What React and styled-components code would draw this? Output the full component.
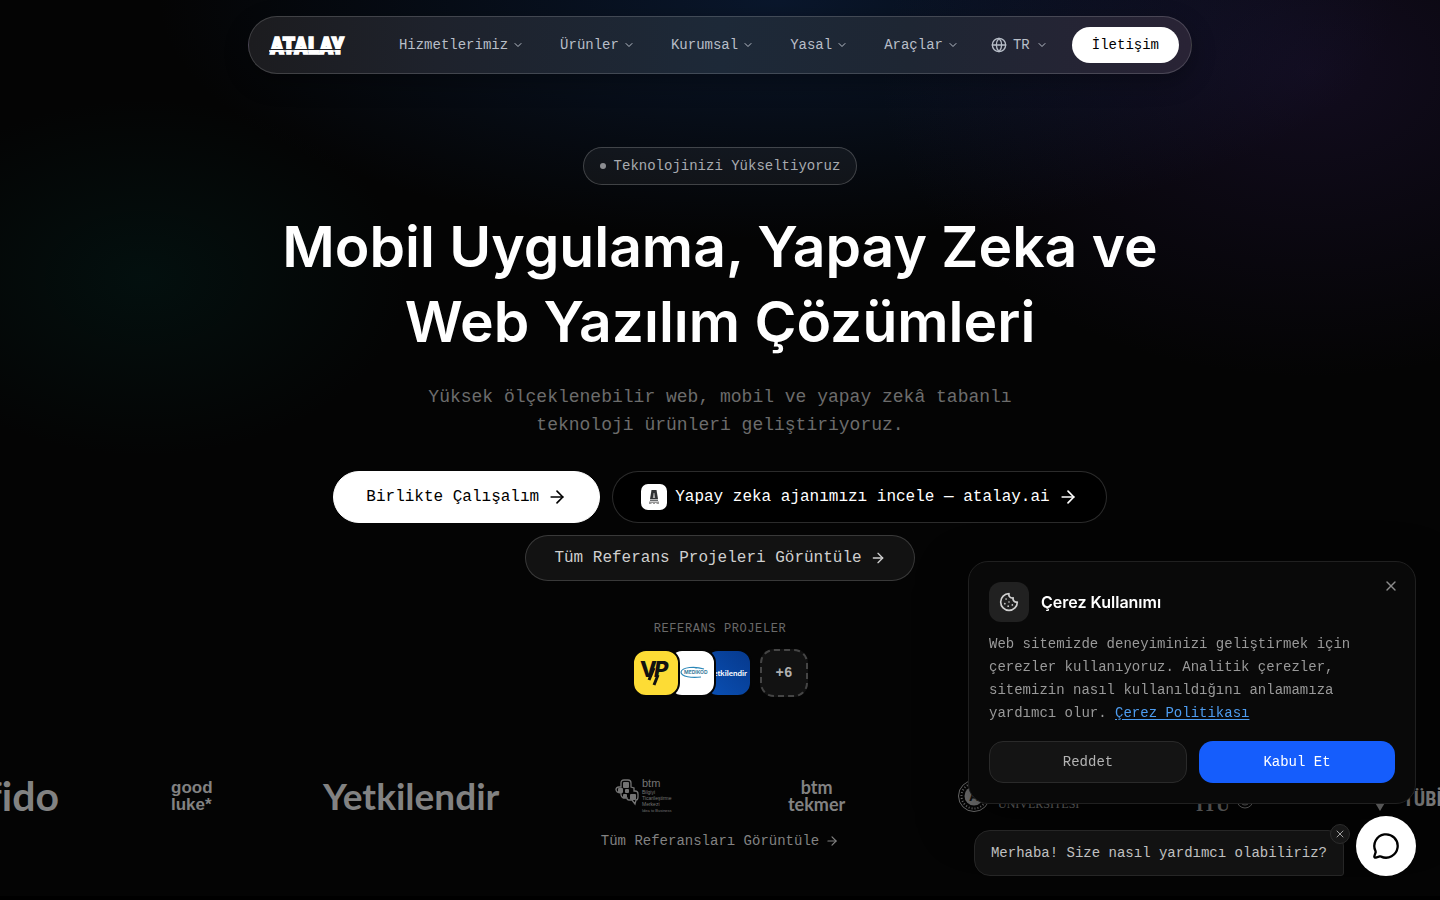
import styled, { createGlobalStyle } from 'styled-components';
import { ArrowRight, ChevronDown, Cookie, Globe, MessageCircle, X } from 'lucide-react';

const GlobalStyle = createGlobalStyle`
  * {
    box-sizing: border-box;
  }
  body {
    margin: 0;
    background: #000;
    color: #fff;
    font-family: "Liberation Mono", monospace;
    font-size: 14px;
    line-height: 20px;
  }
  h1, h2, p {
    margin: 0;
  }
  a {
    color: inherit;
    text-decoration: none;
  }
  button {
    font: inherit;
    color: inherit;
    cursor: pointer;
  }
`;

const Page = styled.div`
  overflow: hidden;
  padding-bottom: 45px;
  background:
    radial-gradient(480px 340px at 91% 8%, rgba(62, 38, 115, 0.24), transparent 90%),
    radial-gradient(310px 210px at 10% 31%, rgba(0, 62, 56, 0.2), transparent 85%),
    radial-gradient(620px 240px at 54% 0%, rgba(20, 54, 110, 0.38), transparent),
    #040404;
`;

const Header = styled.header`
  display: flex;
  justify-content: center;
  padding: 16px 24px 0;
`;

const NavBar = styled.nav`
  display: flex;
  align-items: center;
  justify-content: space-between;
  width: 100%;
  max-width: 944px;
  height: 58px;
  padding: 0 12px 0 20px;
  border: 1px solid rgba(255, 255, 255, 0.16);
  border-radius: 29px;
  background: linear-gradient(90deg, #1c1c1f 0%, #1e222c 20%, #1d2938 50%, #1e2633 70%, #292335 100%);
  box-shadow: 0 8px 24px rgba(0, 0, 0, 0.3);
`;

const Logo = styled.a`
  display: flex;
  svg {
    display: block;
    overflow: visible;
  }
`;

const Menu = styled.div`
  display: flex;
  align-items: center;
  gap: 4px;
`;

const MenuButton = styled.button`
  display: flex;
  align-items: center;
  gap: ${props => (props.$compact ? 6 : 4)}px;
  padding: 8px ${props => (props.$compact ? 12 : 16)}px;
  border: 0;
  background: none;
  color: #b8bec8;
`;

const ContactLink = styled.a`
  margin-left: 8px;
  padding: 8px 20px;
  border-radius: 18px;
  background: #fff;
  color: #000;
`;

const Hero = styled.main`
  display: flex;
  flex-direction: column;
  align-items: center;
  padding: 73px 24px 0;
  text-align: center;
`;

const Badge = styled.div`
  display: flex;
  align-items: center;
  gap: 8px;
  padding: 8px 16px;
  border: 1px solid rgba(255, 255, 255, 0.2);
  border-radius: 19px;
  background: rgba(255, 255, 255, 0.05);
  color: #a8abb0;
`;

const Dot = styled.span`
  width: 6px;
  height: 6px;
  border-radius: 50%;
  background: #8b8d91;
`;

const Title = styled.h1`
  max-width: 896px;
  margin-top: 24px;
  font-family: Inter, "Liberation Sans", sans-serif;
  font-size: 57px;
  font-weight: 600;
  line-height: 75px;
`;

const Subtitle = styled.p`
  max-width: 672px;
  margin-top: 24px;
  color: #6c6c6c;
  font-size: 18px;
  line-height: 28px;
`;

const Actions = styled.div`
  display: flex;
  flex-wrap: wrap;
  justify-content: center;
  gap: 12px;
  max-width: 896px;
  margin-top: 32px;
  font-size: 16px;
`;

const Action = styled.a`
  display: flex;
  align-items: center;
  gap: 8px;
  height: ${props => (props.$small ? 46 : 52)}px;
  padding: 0 28px;
  border: 1px solid rgba(255, 255, 255, 0.17);
  border-radius: 26px;
  background: ${props => (props.$small ? '#121212' : '#000')};
  color: ${props => (props.$small ? '#cfcfcf' : '#fff')};
`;

const PrimaryAction = styled(Action)`
  padding: 0 32px;
  border-color: #fff;
  background: #fff;
  color: #000;
`;

const AgentIcon = styled.span`
  display: flex;
  width: 26px;
  height: 26px;
  border-radius: 7px;
  background: #fff;
`;

const Label = styled.h2`
  margin-top: 40px;
  color: #6a6a6a;
  font-size: 12px;
  font-weight: 400;
  line-height: 16px;
  letter-spacing: 0.05em;
`;

const Projects = styled.div`
  display: flex;
  margin-top: 12px;
  isolation: isolate;
`;

const Project = styled.a`
  display: flex;
  align-items: center;
  justify-content: flex-end;
  z-index: ${props => props.$level};
  width: 48px;
  height: 48px;
  margin-right: -12px;
  overflow: hidden;
  border: 2px solid #040404;
  border-radius: 14px;
  background: ${props => props.$color};
`;

const ProjectName = styled.span`
  padding-right: 3px;
  font: 700 8px Lato, sans-serif;
`;

const MoreProjects = styled.a`
  display: flex;
  align-items: center;
  justify-content: center;
  width: 48px;
  height: 48px;
  margin-left: 20px;
  border: 2px dashed #454545;
  border-radius: 14px;
  background: #121212;
  color: #b0b0b0;
  font-weight: 700;
`;

const Brands = styled.div`
  display: flex;
  align-items: center;
  gap: 112px;
  height: 52px;
  margin-top: 73px;
  overflow: hidden;
  color: #828282;
  white-space: nowrap;
`;

const Brand = styled.div`
  display: flex;
  flex: none;
  align-items: center;
  justify-content: ${props => (props.$end ? 'flex-end' : 'flex-start')};
  width: ${props => props.$width}px;
  font-family: ${props => props.$font || 'Lato'}, sans-serif;
  font-size: ${props => props.$size || 16}px;
  font-variant-ligatures: none;
  font-weight: 700;
  line-height: ${props => props.$line || 48}px;
  text-align: ${props => props.$align || 'center'};
  svg {
    flex: none;
  }
`;

const AllReferences = styled.a`
  display: flex;
  align-items: center;
  justify-content: center;
  gap: 6px;
  width: fit-content;
  margin: 9px auto 0;
  color: #828282;
`;

const CookieCard = styled.section`
  position: fixed;
  right: 24px;
  bottom: 96px;
  width: 448px;
  padding: 20px;
  border: 1px solid #202020;
  border-radius: 20px;
  background: #090909;
  box-shadow: 0 16px 48px rgba(0, 0, 0, 0.5);
`;

const CookieHead = styled.div`
  display: flex;
  align-items: center;
  gap: 12px;
`;

const CookieIcon = styled.span`
  display: flex;
  align-items: center;
  justify-content: center;
  width: 40px;
  height: 40px;
  border-radius: 12px;
  background: #212121;
  color: #d0d0d0;
`;

const CookieTitle = styled.h2`
  font-family: Inter, "Liberation Sans", sans-serif;
  font-size: 16px;
  font-weight: 600;
  line-height: 24px;
`;

const CookieText = styled.p`
  margin: 11px 0 16px;
  color: #999;
  line-height: 23px;
  a {
    color: #4d9cf0;
    text-decoration: underline;
    text-underline-offset: 2px;
  }
`;

const CookieClose = styled.button`
  position: absolute;
  top: 12px;
  right: 12px;
  display: flex;
  padding: 4px;
  border: 0;
  background: none;
  color: #8c8c8c;
`;

const CookieActions = styled.div`
  display: flex;
  gap: 12px;
`;

const CookieButton = styled.button`
  flex: 1;
  height: 42px;
  padding: 0 16px;
  border: ${props => (props.$primary ? '0' : '1px solid #2a2a2a')};
  border-radius: 14px;
  background: ${props => (props.$primary ? '#155dfc' : '#141414')};
  color: ${props => (props.$primary ? '#fff' : '#b3b3b3')};
`;

const Chat = styled.aside`
  position: fixed;
  right: 24px;
  bottom: 24px;
  display: flex;
  align-items: flex-end;
  gap: 12px;
`;

const Bubble = styled.div`
  position: relative;
  padding: 12px 16px;
  border: 1px solid #262626;
  border-radius: 16px 16px 3px 16px;
  background: #121212;
  color: #c0c0c0;
`;

const BubbleClose = styled.button`
  position: absolute;
  top: -7px;
  right: -7px;
  display: flex;
  align-items: center;
  justify-content: center;
  width: 20px;
  height: 20px;
  padding: 0;
  border: 1px solid #2c2c2c;
  border-radius: 50%;
  background: #171717;
  color: #a0a0a0;
`;

const ChatButton = styled.button`
  display: flex;
  align-items: center;
  justify-content: center;
  width: 60px;
  height: 60px;
  padding: 0;
  border: 0;
  border-radius: 50%;
  background: #fff;
  color: #000;
`;

const menuItems = ['Hizmetlerimiz', 'Ürünler', 'Kurumsal', 'Yasal', 'Araçlar'];

const AtalayLogo = () => (
  <svg width="72" height="24" viewBox="0 0 72 24" role="img" aria-label="Atalay">
    <text
      x="1"
      y="21"
      fill="#fff"
      stroke="#fff"
      strokeWidth="1.400"
      fontFamily="'Roboto Condensed', 'Open Sans Condensed', 'Liberation Sans Narrow', 'Liberation Sans', sans-serif"
      fontSize="23"
      fontWeight="900"
    >
      ATALAY
    </text>
    <path d="M0 16.500H72" stroke="#1d1e24" strokeWidth="1" />
    <path d="M0 18H69" stroke="#fff" strokeWidth="1.500" />
  </svg>
);

const AgentLogo = () => (
  <svg width="26" height="26" viewBox="0 0 26 26">
    <path d="M10.500 6h5l1.500 9h-8z" fill="#2f3133" />
    <path d="M12.500 9h1l.7 5h-2.400z" fill="#aaa" />
    <path d="M9 15.500h8v1.500H9z" fill="#6a6c6e" />
    <path d="M8 17.500h10V20h-2.500v-1h-1.500v1h-2v-1h-1.500v1H8z" fill="#999" />
  </svg>
);

const VipLogo = () => (
  <svg width="44" height="44" viewBox="0 0 44 44" fill="#111">
    <g fontFamily="Inter, sans-serif" fontWeight="800">
      <text x="6" y="26" fontSize="22">V</text>
      <text x="20" y="26" fontSize="22" fontStyle="italic">P</text>
    </g>
    <path d="M15 29l5-12M24 24l-4 10" stroke="#111" strokeWidth="3" />
  </svg>
);

const MedikodLogo = () => (
  <svg width="44" height="44" viewBox="0 0 44 44">
    <path d="M34 18C25 15 12 16 11 21c0 5 11 6 20 5" fill="none" stroke="#2b87b8" strokeWidth="1.200" />
    <text x="14" y="23" fill="#397b9b" fontFamily="Inter, sans-serif" fontSize="5" fontWeight="700">MEDİKOD</text>
  </svg>
);

const BtmLogo = () => (
  <svg width="61" height="34" viewBox="0 0 61 34" fill="#747474" fontWeight="400">
    <path
      d="M6 8V4q0-3 3-3h4q3 0 3 3v4l3 1v3h1q3 0 3 3v3q0 3-2 3l-1 4-3-4h-3q-2 0-2-2-5 1-6-3v-2q-5 0-5-4V11q0-3 3-3z"
      fill="none"
      stroke="#747474"
      strokeWidth="1.300"
    />
    <rect x="8" y="3" width="6" height="6" rx="1" />
    <rect x="3" y="9" width="5" height="5" rx="1" />
    <rect x="10" y="10" width="4" height="4" rx="1" />
    <rect x="8" y="15" width="4" height="4" rx="1" />
    <rect x="15" y="15" width="6" height="6" rx="1" />
    <g fontFamily="Liberation Sans, sans-serif">
      <text x="27" y="8" fontSize="11">btm</text>
      <text x="27" y="15" fontSize="5">Bilgiyi</text>
      <text x="27" y="21" fontSize="5">Ticarileştirme</text>
      <text x="27" y="27" fontSize="5">Merkezi</text>
      <text x="27" y="33" fontSize="4">Idea to Business</text>
    </g>
  </svg>
);

const AnkaraLogo = () => (
  <svg width="126" height="34" viewBox="0 0 126 34" fill="#777" fontWeight="400">
    <circle cx="16" cy="17" r="15.500" fill="none" stroke="#777" />
    <circle cx="16" cy="17" r="12.500" fill="none" stroke="#777" strokeWidth="2" strokeDasharray="1 2" />
    <circle cx="16" cy="17" r="9.500" />
    <text x="11" y="22" fill="#111" fontFamily="Liberation Sans" fontSize="14" fontWeight="700">A</text>
    <g fontFamily="Liberation Serif, serif">
      <text x="40" y="14" fontSize="16">ANKARA</text>
      <text x="40" y="29" fontSize="12">ÜNİVERSİTESİ</text>
    </g>
  </svg>
);

const ItuLogo = () => (
  <svg width="58" height="34" viewBox="0 0 58 34" fill="#777">
    <text x="0" y="32" fontFamily="Liberation Serif, serif" fontSize="19" fontWeight="700">İTÜ</text>
    <circle cx="49" cy="21" r="8" fill="none" stroke="#777" />
    <circle cx="49" cy="21" r="5" fill="none" stroke="#777" />
  </svg>
);

const TubitakLogo = () => (
  <svg width="110" height="34" viewBox="0 0 110 34" fill="#828282">
    <path d="M8 22h12l-6 10z" />
    <text x="37" y="27" fontFamily="'Roboto Condensed', 'Liberation Sans Narrow', 'Liberation Sans', sans-serif" fontSize="20" fontWeight="700">
      TÜBİTAK
    </text>
  </svg>
);

const App = () => (
  <>
    <GlobalStyle />
    <Page>
      <Header>
        <NavBar>
          <Logo href="#"><AtalayLogo /></Logo>
          <Menu>
            {menuItems.map(item => (
              <MenuButton key={item} type="button">
                {item}
                <ChevronDown size={12} />
              </MenuButton>
            ))}
            <MenuButton type="button" $compact>
              <Globe size={16} />
              TR
              <ChevronDown size={12} />
            </MenuButton>
            <ContactLink href="#">İletişim</ContactLink>
          </Menu>
        </NavBar>
      </Header>

      <Hero>
        <Badge><Dot />Teknolojinizi Yükseltiyoruz</Badge>
        <Title>Mobil Uygulama, Yapay Zeka ve Web Yazılım Çözümleri</Title>
        <Subtitle>
          Yüksek ölçeklenebilir web, mobil ve yapay zekâ tabanlı teknoloji ürünleri geliştiriyoruz.
        </Subtitle>
        <Actions>
          <PrimaryAction href="#">Birlikte Çalışalım<ArrowRight size={20} /></PrimaryAction>
          <Action href="#">
            <AgentIcon><AgentLogo /></AgentIcon>
            Yapay zeka ajanımızı incele — atalay.ai
            <ArrowRight size={20} />
          </Action>
          <Action href="#" $small>Tüm Referans Projeleri Görüntüle<ArrowRight size={16} /></Action>
        </Actions>
        <Label>REFERANS PROJELER</Label>
        <Projects>
          <Project href="#" aria-label="VIP" $level={3} $color="#fddc35"><VipLogo /></Project>
          <Project href="#" aria-label="Medikod" $level={2} $color="#fff"><MedikodLogo /></Project>
          <Project href="#" $level={1} $color="linear-gradient(45deg, #0a50b5, #06398c)">
            <ProjectName>Yetkilendir</ProjectName>
          </Project>
          <MoreProjects href="#">+6</MoreProjects>
        </Projects>
      </Hero>

      <Brands>
        <Brand $width={59} $size={41} $end>fido</Brand>
        <Brand $width={40} $size={17} $line={17} $font="Liberation Sans" $align="left">
          <span>good<br />luke*</span>
        </Brand>
        <Brand $width={180} $size={37}>Yetkilendir</Brand>
        <Brand $width={61}><BtmLogo /></Brand>
        <Brand $width={58} $size={18} $line={17}><span>btm<br />tekmer</span></Brand>
        <Brand $width={126}><AnkaraLogo /></Brand>
        <Brand $width={58}><ItuLogo /></Brand>
        <Brand $width={110}><TubitakLogo /></Brand>
      </Brands>
      <AllReferences href="#">Tüm Referansları Görüntüle<ArrowRight size={14} /></AllReferences>
    </Page>

    <CookieCard aria-labelledby="cookie-title">
      <CookieHead>
        <CookieIcon><Cookie size={20} /></CookieIcon>
        <CookieTitle id="cookie-title">Çerez Kullanımı</CookieTitle>
      </CookieHead>
      <CookieClose type="button" aria-label="Kapat"><X size={16} /></CookieClose>
      <CookieText>
        Web sitemizde deneyiminizi geliştirmek için çerezler kullanıyoruz. Analitik çerezler, sitemizin
        nasıl kullanıldığını anlamamıza yardımcı olur. <a href="#">Çerez Politikası</a>
      </CookieText>
      <CookieActions>
        <CookieButton type="button">Reddet</CookieButton>
        <CookieButton type="button" $primary>Kabul Et</CookieButton>
      </CookieActions>
    </CookieCard>

    <Chat>
      <Bubble>
        Merhaba! Size nasıl yardımcı olabiliriz?
        <BubbleClose type="button" aria-label="Mesajı kapat"><X size={12} /></BubbleClose>
      </Bubble>
      <ChatButton type="button" aria-label="Sohbeti aç"><MessageCircle size={28} /></ChatButton>
    </Chat>
  </>
);

export default App;
